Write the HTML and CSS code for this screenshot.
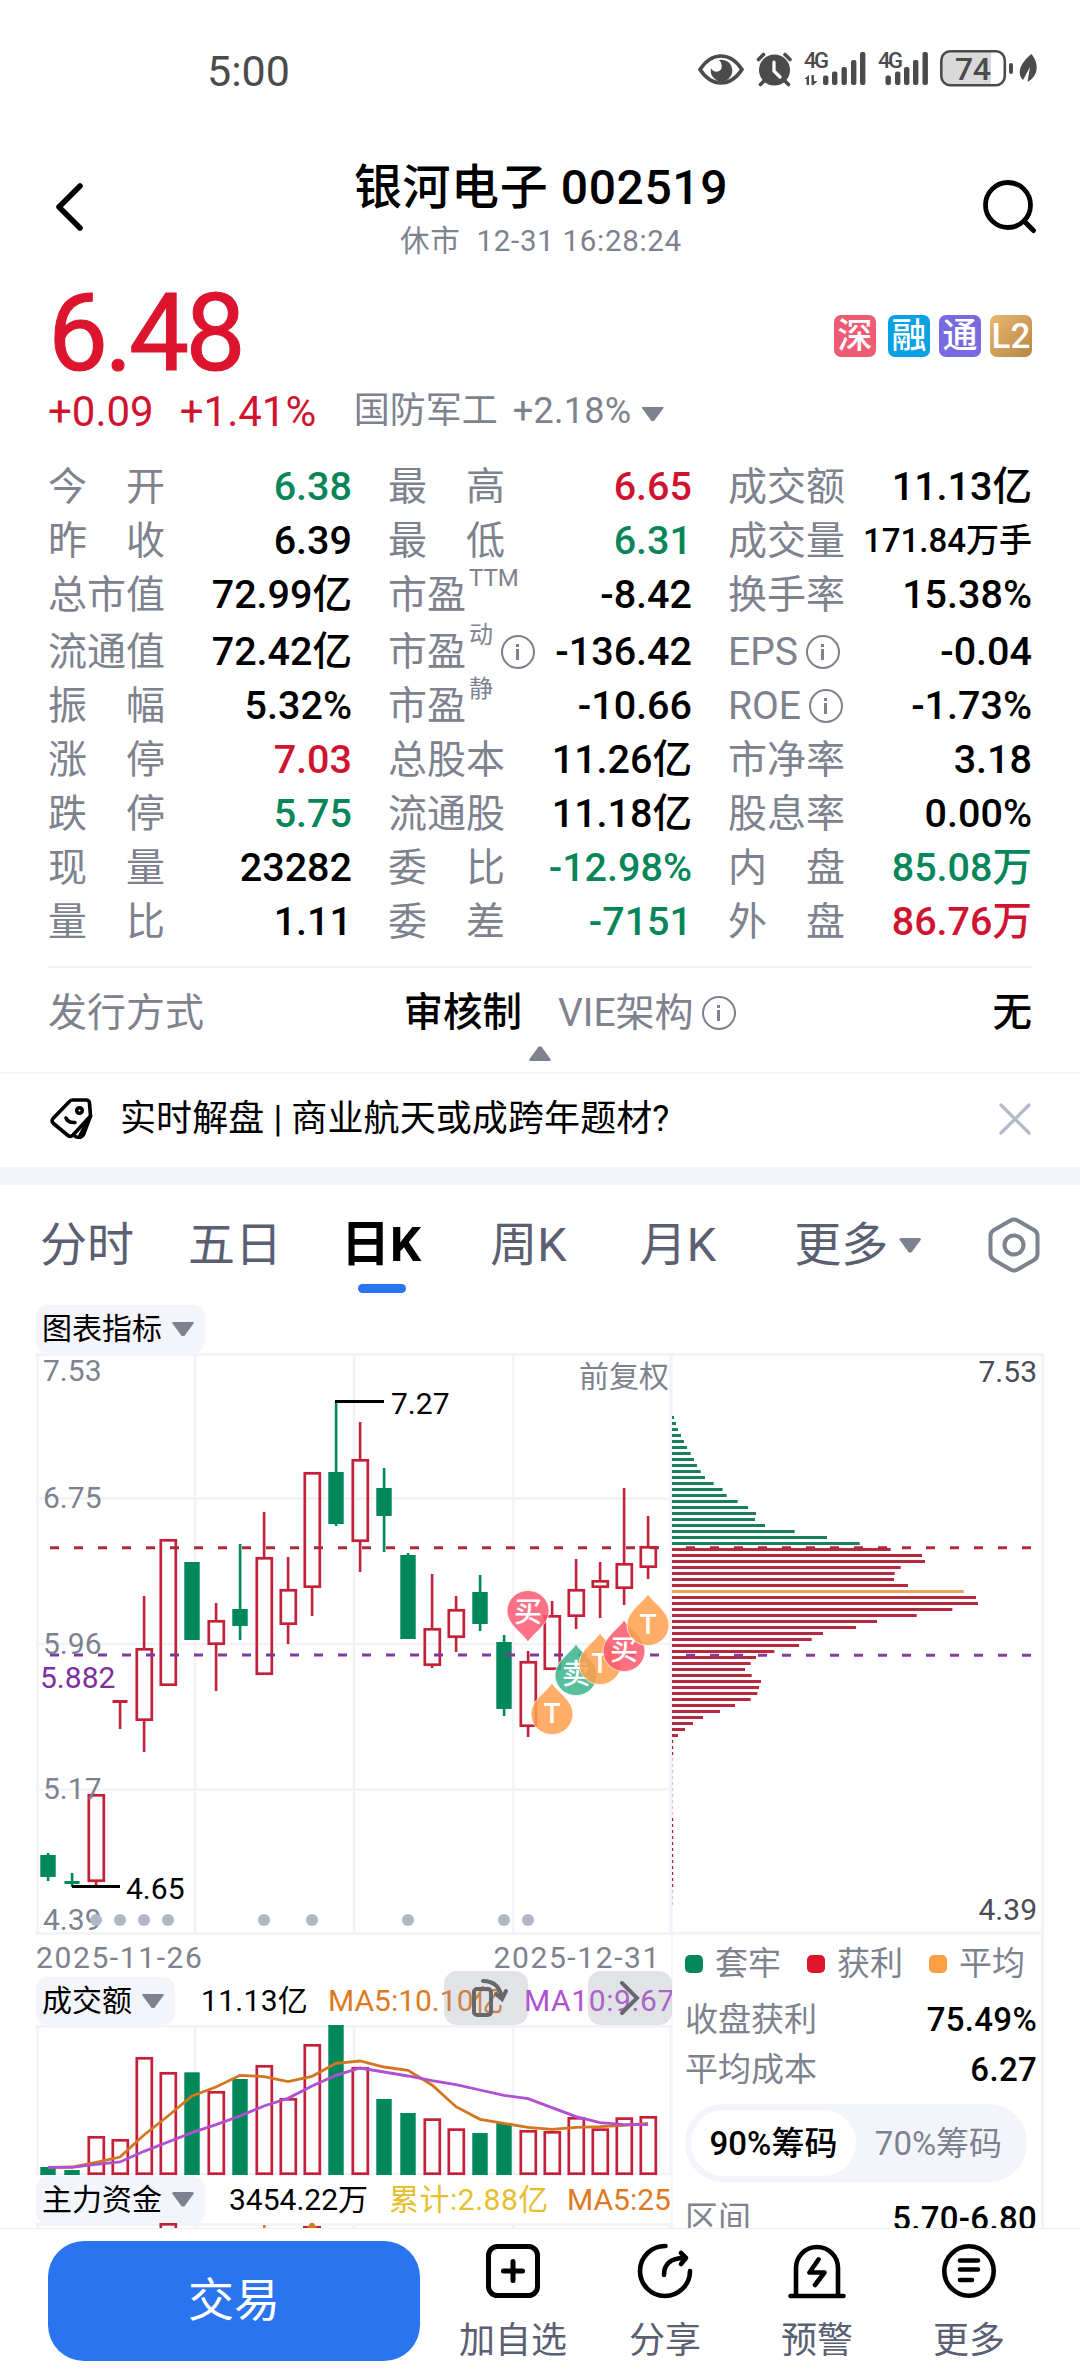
FILE: index.html
```html
<!DOCTYPE html>
<html lang="zh-CN">
<head>
  <meta charset="UTF-8">
  <title>银河电子 002519</title>
  <meta name="viewport" content="width=device-width, initial-scale=1.0">
  <link rel="stylesheet" href="styles.css">
</head>
<body>
  <div class="status">
    <span class="clock">5:00</span>
    <svg class="status-icons" width="342" height="44" viewBox="698 46 342 44">
      <!-- eye -->
      <path d="M700 69.500C707 59 714 56 721 56s14 3 21 13.500C735 80 728 83 721 83s-14-3-21-13.500z" fill="none" stroke="#4b4b4b" stroke-width="3.600"/>
      <path d="M719 60a10.800 10.800 0 1 1-8 8c2 5 9 5 10.500 0 .8-3.500-.5-6-2.500-8z" fill="#4b4b4b"/>
      <!-- alarm -->
      <g fill="none" stroke="#4b4b4b" stroke-width="3.600" stroke-linecap="round">
        <circle cx="774.500" cy="70" r="15.500" fill="#4b4b4b" stroke="none"/>
        <path d="M758.500 59.500l5-5M790 59.500l-5-5M764 81l-3.500 3.500M785 81l3.500 3.500"/>
        <path d="M774 62v9l6 6" stroke="#fff" stroke-width="3.200"/>
      </g>
      <!-- signal -->
      <g fill="#4b4b4b">
        <text class="net" x="804" y="68" textLength="25">4G</text>
        <path d="M809 75v10h-2.400v-6H804.500zM811.500 85V75h2.400v6h3.600l-4 4z"/>
        <rect x="823" y="75.500" width="5.400" height="9.500" rx="2"/>
        <rect x="832" y="71.500" width="5.400" height="13.500" rx="2"/>
        <rect x="841.500" y="67" width="5.400" height="18" rx="2"/>
        <rect x="851" y="60" width="5.400" height="25" rx="2"/>
        <rect x="860" y="52" width="5.400" height="33" rx="2"/>
        <text class="net" x="878" y="68" textLength="25">4G</text>
        <rect x="885.500" y="75.500" width="5.400" height="9.500" rx="2"/>
        <rect x="895" y="71.500" width="5.400" height="13.500" rx="2"/>
        <rect x="904" y="67" width="5.400" height="18" rx="2"/>
        <rect x="913" y="60" width="5.400" height="25" rx="2"/>
        <rect x="922.500" y="52" width="5.400" height="33" rx="2"/>
      </g>
      <!-- battery -->
      <path d="M950 52h41v33h-41q-8 0-8-8V60q0-8 8-8z" fill="#d9d9d9"/>
      <rect x="941.300" y="51.300" width="63.500" height="34" rx="9" fill="none" stroke="#4b4b4b" stroke-width="2.600"/>
      <rect x="1009" y="63" width="4" height="11" rx="2" fill="#4b4b4b"/>
      <text class="batt" x="955" y="80" textLength="36">74</text>
      <!-- leaf -->
      <path d="M1031.500 54c8 10 7 22-4 28l2.500-15-7 13c-6-6-4-16 8.500-26z" fill="#4b4b4b"/>
    </svg>
  </div>

  <header class="top">
    <svg width="36" height="56" viewBox="0 0 36 56"><path d="M32 7L11 28l21 21" fill="none" stroke="#000" stroke-width="5.500" stroke-linecap="round" stroke-linejoin="round"/></svg>
    <div class="title">
      <h1>银河电子 002519</h1>
      <p>休市&nbsp; 12-31 16:28:24</p>
    </div>
    <svg width="56" height="56" viewBox="0 0 56 56"><circle cx="26" cy="25" r="22.500" fill="none" stroke="#000" stroke-width="4.800"/><path d="M42 41l9.500 9.500" stroke="#000" stroke-width="5" stroke-linecap="round"/></svg>
  </header>

  <section class="quote">
    <div class="price-row">
      <div class="price">6.48</div>
      <div class="tags">
        <span class="tag sz">深</span><span class="tag rong">融</span><span class="tag tong">通</span><span class="tag l2">L2</span>
      </div>
    </div>
    <div class="change">
      <span class="chg">+0.09</span><span class="chg pct">+1.41%</span>
      <span class="industry">国防军工</span><span class="ind-pct">+2.18%</span><i class="tri"></i>
    </div>
  </section>

  <section class="stats">
    <div class="col">
      <div class="item"><label><b>今</b><b>开</b></label><span class="down">6.38</span></div>
      <div class="item"><label><b>昨</b><b>收</b></label><span>6.39</span></div>
      <div class="item"><label>总市值</label><span>72.99亿</span></div>
      <div class="item gap"><label>流通值</label><span>72.42亿</span></div>
      <div class="item"><label><b>振</b><b>幅</b></label><span>5.32%</span></div>
      <div class="item"><label><b>涨</b><b>停</b></label><span class="up">7.03</span></div>
      <div class="item"><label><b>跌</b><b>停</b></label><span class="down">5.75</span></div>
      <div class="item"><label><b>现</b><b>量</b></label><span>23282</span></div>
      <div class="item"><label><b>量</b><b>比</b></label><span>1.11</span></div>
    </div>
    <div class="col">
      <div class="item"><label><b>最</b><b>高</b></label><span class="up">6.65</span></div>
      <div class="item"><label><b>最</b><b>低</b></label><span class="down">6.31</span></div>
      <div class="item"><label>市盈<sup>TTM</sup></label><span>-8.42</span></div>
      <div class="item gap"><label>市盈<sup>动</sup><i class="info"></i></label><span>-136.42</span></div>
      <div class="item"><label>市盈<sup>静</sup></label><span>-10.66</span></div>
      <div class="item"><label>总股本</label><span>11.26亿</span></div>
      <div class="item"><label>流通股</label><span>11.18亿</span></div>
      <div class="item"><label><b>委</b><b>比</b></label><span class="down">-12.98%</span></div>
      <div class="item"><label><b>委</b><b>差</b></label><span class="down">-7151</span></div>
    </div>
    <div class="col">
      <div class="item"><label>成交额</label><span>11.13亿</span></div>
      <div class="item"><label>成交量</label><span class="small">171.84万手</span></div>
      <div class="item"><label>换手率</label><span>15.38%</span></div>
      <div class="item gap"><label>EPS<i class="info"></i></label><span>-0.04</span></div>
      <div class="item"><label>ROE<i class="info"></i></label><span>-1.73%</span></div>
      <div class="item"><label>市净率</label><span>3.18</span></div>
      <div class="item"><label>股息率</label><span>0.00%</span></div>
      <div class="item"><label><b>内</b><b>盘</b></label><span class="down">85.08万</span></div>
      <div class="item"><label><b>外</b><b>盘</b></label><span class="up">86.76万</span></div>
    </div>
  </section>

  <section class="extra">
    <div class="item"><label>发行方式</label><span>审核制</span></div>
    <div class="item"><label>VIE架构<i class="info"></i></label><span>无</span></div>
  </section>
  <div class="collapse"><i class="tri tri-up"></i></div>

  <section class="news">
    <svg width="44" height="46" viewBox="0 0 44 46">
      <g fill="none" stroke="#000" stroke-width="3.600" stroke-linecap="round" stroke-linejoin="round">
        <path d="M22.500 4H36q3 0 3.500 3l1 13-17.500 19q-2.500 2.500-5 .5L3.500 27.500q-2.500-2.500-.5-5L19 6q1.500-2 3.500-2z"/>
        <path d="M40.500 20l-7 18.500q-2 3.500-7 2.500l-3-2M37 26l-7 13.500"/>
        <circle cx="29.500" cy="14.500" r="2.800"/>
        <path d="M16 22q2 5 9 4.500"/>
      </g>
    </svg>
    <p>实时解盘 | 商业航天或成跨年题材?</p>
    <svg width="34" height="34" viewBox="0 0 34 34"><path d="M3 3l28 28M31 3L3 31" stroke="#b3b9c6" stroke-width="3.200" stroke-linecap="round"/></svg>
  </section>

  <nav class="tabs">
    <span>分时</span><span>五日</span><span class="active">日K</span><span>周K</span><span>月K</span><span>更多<i class="tri"></i></span>
    <svg width="54" height="58" viewBox="0 0 54 58"><path d="M23.500 4.500q3.500-2 7 0L47 14q3.500 2 3.500 6v18q0 4-3.500 6l-16.500 9.500q-3.500 2-7 0L7 44q-3.500-2-3.500-6V20q0-4 3.500-6z" fill="none" stroke="#7e828e" stroke-width="4"/><circle cx="27" cy="29" r="9.500" fill="none" stroke="#7e828e" stroke-width="4"/></svg>
  </nav>

  <main class="board">
    <div class="left">
      <div class="chip">图表指标<i class="tri"></i></div>
      <svg id="kline" class="chart" width="636" height="583" viewBox="36 1353 636 583"></svg>
      <div class="dates"><span>2025-11-26</span><span>2025-12-31</span></div>
      <div class="ind">
        <div class="chip">成交额<i class="tri"></i></div>
        <span class="v1">11.13亿</span><span class="ma5">MA5:10.10亿</span><span class="ma10">MA10:9.67亿</span>
        <button class="float rotate"><svg width="84" height="54" viewBox="444 1971 84 54"><g fill="none" stroke="#66686c" stroke-width="4" stroke-linecap="round"><rect x="474" y="1989" width="17" height="26" rx="3"/><path d="M483 1981q16 0 19 17M496 1994l6 5 4-8"/></g></svg></button>
        <button class="float next"><svg width="84" height="54" viewBox="588 1971 84 54"><path d="M622 1983l15 15-15 15" fill="none" stroke="#66686c" stroke-width="4" stroke-linecap="round"/></svg></button>
      </div>
      <svg id="volume" class="chart" width="636" height="151" viewBox="36 2025 636 151"></svg>
      <div class="ind fund">
        <div class="chip">主力资金<i class="tri"></i></div>
        <span class="f1">3454.22万</span><span class="sum">累计:2.88亿</span><span class="ma5">MA5:2568万</span>
      </div>
      <svg id="fund" class="chart" width="636" height="30" viewBox="36 2223 636 30"></svg>
    </div>
    <div class="right">
      <svg id="chips" class="chart" width="374" height="583" viewBox="670 1353 374 583"></svg>
      <div class="panel">
        <div class="legend">
          <span><i class="dot g"></i>套牢</span><span><i class="dot r"></i>获利</span><span><i class="dot o"></i>平均</span>
        </div>
        <div class="line"><label>收盘获利</label><span>75.49%</span></div>
        <div class="line"><label>平均成本</label><span>6.27</span></div>
        <div class="seg"><span class="on">90%筹码</span><span>70%筹码</span></div>
        <div class="line"><label>区间</label><span>5.70-6.80</span></div>
      </div>
    </div>
  </main>

  <footer class="bar">
    <button class="trade">交易</button>
    <div class="act">
      <svg width="60" height="60" viewBox="0 0 60 60"><g fill="none" stroke="#000" stroke-width="5" stroke-linecap="round"><rect x="5.500" y="5.500" width="49" height="49" rx="9"/><path d="M30 20.500v19M20.500 30h19"/></g></svg>
      <span>加自选</span>
    </div>
    <div class="act">
      <svg width="60" height="60" viewBox="0 0 60 60"><g fill="none" stroke="#000" stroke-width="4.600" stroke-linecap="round" stroke-linejoin="round"><path d="M30.500 5A25 25 0 1 0 55 30"/><path d="M29 34c0-11 7-17 20-17M46 12l5 5-5 6"/></g></svg>
      <span>分享</span>
    </div>
    <div class="act">
      <svg width="60" height="60" viewBox="0 0 60 60"><g fill="none" stroke="#000" stroke-width="4.600" stroke-linecap="round" stroke-linejoin="round"><path d="M9 54V27a21 21 0 0 1 42 0v27M3.500 55h53"/><path d="M31.500 18.500L22.500 31.500h15L28 44"/></g></svg>
      <span>预警</span>
    </div>
    <div class="act">
      <svg width="60" height="60" viewBox="0 0 60 60"><g fill="none" stroke="#000" stroke-width="4.600" stroke-linecap="round"><circle cx="30" cy="30" r="24.700"/><path d="M21 19.500h18M21 28.500h18M21 39h12"/></g></svg>
      <span>更多</span>
    </div>
  </footer>

  <script src="chart.js"></script>
</body>
</html>
```

FILE: styles.css
```css
* { box-sizing: border-box; }
body { margin: 0; width: 1080px; height: 2376px; overflow: hidden; display: flex; flex-direction: column; background: #fff; color: #000; font-family: Roboto, "Noto Sans CJK SC", sans-serif; line-height: 1.2; }
h1, p { margin: 0; font-weight: 400; }
svg { display: block; flex: none; }
button { border: none; padding: 0; font-family: inherit; line-height: inherit; }
i { font-style: normal; }
span, label { white-space: nowrap; }

.up { color: #d0142f; }
.down { color: #07865a; }
.tri { display: inline-block; width: 22px; height: 15px; background: #7e828e; clip-path: polygon(6% 0, 94% 0, 100% 8%, 56% 96%, 44% 96%, 0 8%); }
.tri-up { transform: rotate(180deg); }

.status { height: 140px; padding: 46px 40px 0 207px; display: flex; justify-content: space-between; flex: none; color: #4b4b4b; }
.clock { font-size: 43px; line-height: 50px; }
.net { font-size: 22px; font-weight: 500; }
.batt { font-size: 32px; font-weight: 500; fill: #4b4b4b; }

.top { height: 128px; padding: 0 46px 0 48px; display: flex; justify-content: space-between; flex: none; }
.top > svg { margin-top: 39px; }
.top > svg:last-child { margin: 40px -4px 0 0; }
.title { text-align: center; padding-left: 16px; }
.title h1 { font-size: 48px; font-weight: 500; line-height: 56px; margin-top: 20px; letter-spacing: 0.600px; }
.title p { font-size: 29.500px; line-height: 36px; margin-top: 7px; color: #7e828e; letter-spacing: 0.700px; }

.quote { padding: 0 48px; flex: none; height: 190px; }
.price-row { display: flex; justify-content: space-between; height: 120px; }
.price { font-size: 107px; font-weight: 400; line-height: 132px; letter-spacing: -3.700px; color: #dc142e; -webkit-text-stroke: 1px #dc142e; }
.tags { display: flex; gap: 9px; margin-top: 47px; }
.tag { width: 42px; height: 42px; border-radius: 7px; color: #fff; font-size: 35px; font-weight: 500; line-height: 43px; text-align: center; }
.sz { background: #ee5c74; margin-right: 3px; }
.rong { background: #0aa0e4; }
.tong { background: #7a6ae0; }
.l2 { background: linear-gradient(135deg, #ebb873, #b88442); }
.change { display: flex; align-items: center; height: 48px; color: #7e828e; font-size: 36px; }
.chg { font-size: 42px; color: #d0142f; }
.pct { margin-left: 26px; width: 138px; }
.industry { margin-left: 36px; font-size: 36px; }
.ind-pct { margin-left: 15px; width: 121px; letter-spacing: 0.300px; }
.change .tri { margin-left: 8px; margin-top: 4px; }

.stats { display: flex; gap: 36px; padding: 2px 48px 0; flex: none; height: 508px; }
.col { width: 304px; }
.item { display: flex; justify-content: space-between; align-items: center; height: 54px; font-size: 39.500px; font-weight: 500; }
.gap { margin-top: 3px; }
.item label { display: flex; align-items: center; justify-content: space-between; min-width: 117px; color: #7e828e; font-size: 39px; font-weight: 400; }
.item label:has(i), .item label:has(sup) { justify-content: flex-start; }
.item b { font-weight: 400; }
.item sup { font-size: 24px; line-height: 24px; align-self: flex-start; margin: -6px 0 0 3px; }
.item .small { font-size: 33px; }
.info { width: 34px; height: 34px; margin-left: 8px; border: 2.500px solid #7e828e; border-radius: 50%; position: relative; flex: none; }
.info::before { content: ""; position: absolute; left: 13px; top: 7px; width: 3px; height: 3px; background: #7e828e; }
.info::after { content: ""; position: absolute; left: 13px; top: 12px; width: 3px; height: 11px; background: #7e828e; }

.extra { display: flex; gap: 36px; margin: 0 48px; border-top: 2px solid #f4f4f6; height: 80px; padding-top: 18px; flex: none; }
.extra .item:first-child { width: 474px; }
.extra .item:last-child { flex: 1; }
.collapse { height: 28px; flex: none; text-align: center; border-bottom: 2px solid #f5f5f8; line-height: 14px; }

.news { display: flex; align-items: center; height: 93px; padding: 0 48px 3px 50px; flex: none; }
.news p { flex: 1; margin: -1px 0 0 26px; font-size: 36px; line-height: 50px; letter-spacing: 0.100px; }

.tabs { display: flex; align-items: center; height: 138px; padding: 0 39px 0 40px; border-top: 18px solid #f4f5fa; color: #5a6072; font-size: 47px; flex: none; }
.tabs span { position: relative; line-height: 60px; }
.tabs span:nth-child(2) { margin-left: 54px; }
.tabs span:nth-child(3) { margin-left: 59px; }
.tabs span:nth-child(4) { margin-left: 69px; }
.tabs span:nth-child(5) { margin-left: 73px; }
.tabs span:nth-child(6) { margin-left: 78px; }
.tabs .active { color: #000; font-weight: 700; font-size: 49px; }
.tabs .active::after { content: ""; position: absolute; left: 17px; bottom: -18px; width: 48px; height: 9px; border-radius: 5px; background: #2b74f0; }
.tabs .tri { margin-left: 11px; vertical-align: 8px; }
.tabs svg { margin-left: auto; }

.board { display: flex; height: 923px; padding-left: 36px; overflow: hidden; flex: none; }
.left { width: 634px; }
.chip { display: inline-flex; align-items: center; height: 48px; padding: 0 11px 0 6px; border-radius: 12px; background: #f4f5fa; font-size: 30px; vertical-align: top; white-space: nowrap; flex: none; }
.chip .tri { margin-left: 10px; }
.chart text { font-size: 30px; fill: #7e828e; }
.dates { display: flex; justify-content: space-between; height: 41px; padding-right: 9px; color: #7e828e; font-size: 30px; line-height: 43px; letter-spacing: 1.600px; }
.ind { position: relative; display: flex; align-items: center; width: 636px; height: 48px; clip-path: inset(-8px 0 0 0); font-size: 30px; }
.ind > span { flex: none; }
.v1 { margin-left: 26px; width: 127px; letter-spacing: 0.300px; }
.ma5 { color: #dd7a1d; width: 196px; }
.ma10 { color: #b050d6; letter-spacing: 0.600px; }
.fund { height: 47px; }
.f1 { margin-left: 24px; width: 160px; }
.sum { color: #e6c02c; width: 178px; letter-spacing: 0.500px; }
.float { position: absolute; top: -6px; width: 84px; height: 54px; border-radius: 13px; background: rgba(150, 155, 168, 0.28); }
.rotate { left: 408px; }
.next { left: 552px; }

.right { width: 374px; padding-top: 48px; }
.panel { border-right: 3px solid #f2f3f8; border-left: 2px solid #f5f6fa; height: 320px; padding: 0 4px 0 12px; margin-left: 1px; font-size: 33px; color: #7e828e; }
.legend { display: flex; justify-content: space-between; align-items: center; height: 56px; padding-right: 12px; }
.legend span { display: flex; align-items: center; gap: 12px; }
.dot { width: 18px; height: 18px; border-radius: 5px; }
.g { background: #00885a; }
.r { background: #e0142d; }
.o { background: #ff9f43; }
.line { display: flex; justify-content: space-between; align-items: center; height: 50px; }
.legend + .line { margin-top: 3px; }
.line span { color: #000; font-weight: 500; letter-spacing: 0.300px; }
.seg { display: flex; width: 342px; height: 78px; padding: 6px; margin: 9px 0 12px 0; border-radius: 38px; background: #f4f5fa; }
.seg span { width: 165px; line-height: 67px; text-align: center; border-radius: 33px; }
.seg .on { background: #fff; color: #000; font-weight: 500; }

.bar { display: flex; height: 148px; padding-left: 48px; border-top: 1px solid #efeff2; background: #fff; flex: none; }
.trade { width: 372px; height: 120px; margin: 12px 17px 0 0; border-radius: 36px; background: #2b74f0; color: #fff; font-size: 46px; }
.act { width: 152px; display: flex; flex-direction: column; align-items: center; padding-top: 12px; color: #5a6072; font-size: 36px; line-height: 50px; }
.act span { margin-top: 15px; }
```

FILE: chart.js
```js
const RED = '#c4203a', GREEN = '#00885a', GRID = '#f2f3f8';
const xAt = i => 48 + 24 * i;

// [up, high, body top, body bottom, low]
const candles = [
  [0, 1853, 1855, 1877, 1881], [0, 1873, 1881, 1884, 1887], [1, 1794, 1794, 1882, 1885], [1, 1700, 1700, 1703, 1729],
  [1, 1596, 1648, 1721, 1752], [1, 1539, 1539, 1686, 1686], [0, 1562, 1562, 1640, 1640], [1, 1603, 1620, 1645, 1691],
  [0, 1544, 1609, 1626, 1640], [1, 1512, 1557, 1675, 1675], [1, 1557, 1589, 1625, 1644], [1, 1472, 1472, 1588, 1616],
  [0, 1401, 1472, 1524, 1526], [1, 1422, 1459, 1542, 1572], [0, 1468, 1488, 1516, 1552], [0, 1553, 1555, 1639, 1639],
  [1, 1574, 1628, 1666, 1668], [1, 1596, 1609, 1638, 1652], [0, 1575, 1592, 1624, 1631], [0, 1635, 1642, 1709, 1716],
  [1, 1651, 1661, 1727, 1737], [1, 1601, 1615, 1670, 1670], [1, 1559, 1589, 1617, 1629], [1, 1562, 1580, 1588, 1618],
  [1, 1488, 1563, 1589, 1605], [1, 1516, 1546, 1568, 1579]
];
const volumes = [711, 720, 618, 627, 381, 426, 427, 483, 447, 405, 504, 342, 285, 411, 507, 549, 565, 595, 609, 579, 600, 603, 561, 595, 562, 558];
const ma5 = [712, 711, 697, 681, 615, 558, 498, 471, 436, 440, 455, 439, 400, 393, 411, 421, 465, 530, 568, 580, 592, 598, 592, 590, 586, 580];
const ma10 = [712, 712, 703, 696, 664, 636, 608, 584, 558, 528, 505, 468, 436, 414, 426, 438, 452, 464, 480, 496, 506, 533, 560, 578, 584, 584];
const cost = [6, 12, 18, 27, 36, 45, 56, 66, 75, 86, 99, 125, 152, 164, 197, 228, 252, 249, 279, 368, 465, 563,
  656, 750, 759, 686, 668, 666, 708, 875, 912, 918, 841, 734, 615, 552, 453, 419, 381, 307, 252, 236, 219, 239, 267, 261, 256, 236, 189, 144, 93, 63, 39, 18];

const rect = (x, y, w, h, fill) => `<rect x="${x}" y="${y}" width="${w}" height="${h}" fill="${fill}"/>`;
const text = (x, y, s, extra = '') => `<text x="${x}" y="${y}" ${extra}>${s}</text>`;
const dash = (x1, x2, y, color) => `<path d="M${x1} ${y}H${x2}" stroke="${color}" stroke-width="3" stroke-dasharray="9 15"/>`;

function box(x, top, bottom) {
  return `<rect x="${x - 7.2}" y="${top + 1.3}" width="15" height="${bottom - top - 2.6}" fill="none" stroke="${RED}" stroke-width="2.7"/>`;
}

function grid(top, bottom, rows) {
  let s = '';
  [37.5, 195, 354, 513, 670.5].forEach(x => s += rect(x - 1.2, top, 2.6, bottom - top, GRID));
  rows.forEach(y => s += rect(36, y - 1.3, 636, 2.6, GRID));
  return s;
}

function candle(c, i) {
  const [up, high, top, bottom, low] = c, x = xAt(i);
  const color = up ? RED : GREEN;
  let s = rect(x - 1.2, high, 2.6, top - high, color) + rect(x - 1.2, bottom, 2.6, low - bottom, color);
  if (bottom - top < 5) return s + rect(x - 7.5, top, 15, 3, color);
  return s + (up ? box(x, top, bottom) : rect(x - 7.7, top, 15.4, bottom - top, color));
}

function pin(x, y, color, label, down) {
  return `<g transform="translate(${x} ${y})"><path d="M0-30C5-21 21-13 21 1A21 20.500 0 0 1-21 1C-21-13-5-21 0-30Z" ${down ? 'transform="scale(1 -1)"' : ''} fill="${color}" fill-opacity=".86" stroke="#fff" stroke-opacity=".7" stroke-width="1"/>` +
    `<text y="10" text-anchor="middle" style="fill:#fff;font-size:28px;font-weight:500">${label}</text></g>`;
}

function drawKline() {
  let s = grid(1353, 1935, [1354.5, 1498.5, 1644, 1789.5, 1933.5]);
  s += candles.map(candle).join('');
  s += dash(50, 660, 1547.8, '#b02a3c') + dash(50, 660, 1655, '#7d3a9c');
  s += text(43, 1381, '7.53') + text(43, 1508, '6.75') + text(43, 1654, '5.96') + text(43, 1799, '5.17') + text(43, 1930, '4.39');
  s += text(40, 1688, '5.882', 'style="fill:#7d2f9e"');
  s += text(669, 1387, '前复权', 'text-anchor="end"');
  s += rect(335, 1400, 49, 3, '#000') + text(391, 1414, '7.27', 'style="fill:#000"');
  s += rect(72, 1885, 48, 3, '#000') + text(126, 1899, '4.65', 'style="fill:#000"');
  [2, 3, 4, 5, 9, 11, 15, 19, 20].forEach(i => s += `<circle cx="${xAt(i)}" cy="1920" r="6" fill="#b0b7c5"/>`);
  s += pin(528, 1612, '#fb5a72', '买', true);
  s += pin(576, 1674, '#3cb48c', '卖') + pin(600, 1663, '#ffa04e', 'T') + pin(624, 1650, '#fb5a6c', '买');
  s += pin(648, 1624, '#ffa04e', 'T') + pin(552, 1713, '#ffa04e', 'T');
  document.getElementById('kline').innerHTML = s;
}

function drawVolume() {
  const y = v => 1930 + v / 3;
  const line = (d, color) => `<polyline points="${d.map((v, i) => xAt(i) + ',' + y(v)).join(' ')}" fill="none" stroke="${color}" stroke-width="2.8"/>`;
  let s = grid(2025, 2175, [2026.3, 2174]);
  volumes.forEach((v, i) => s += candles[i][0] ? box(xAt(i), y(v), 2175) : rect(xAt(i) - 7.7, y(v), 15.4, 2175 - y(v), GREEN));
  s += line(ma5, '#d4761f') + line(ma10, '#b14fd2');
  document.getElementById('volume').innerHTML = s;
}

function drawFund() {
  let s = grid(2223, 2260, [2224.5]);
  s += box(168, 2223, 2260) + rect(303, 2226, 18, 3, RED) + rect(263, 2225, 2.6, 10, '#d4761f');
  s += '<path d="M304 2232L312 2221l8 11z" fill="#d4761f"/>';
  document.getElementById('fund').innerHTML = s;
}

function drawChips() {
  let s = rect(670, 1353, 374, 2.6, GRID) + rect(1041.3, 1353, 2.6, 583, GRID) + rect(670, 1932, 374, 2.6, GRID) + rect(670, 1353, 2.6, 583, GRID);
  cost.forEach((w, i) => {
    const color = i < 22 ? '#1c7f5c' : i === 29 ? '#e9a45c' : '#b52a3e';
    s += rect(672, 1416 + i * 6, w / 3, 3, color);
  });
  // long tail of old holdings
  for (let i = 54; i < 82; i++) {
    s += `<rect x="672" y="${1416 + i * 6}" width="1.2" height="3" fill="#a8283a" opacity="${i > 56 && i < 67 || i > 78 ? 0.25 : 1}"/>`;
  }
  s += dash(686, 1032, 1547.8, '#b02a3c') + dash(686, 1032, 1655.2, '#8a3a9c');
  s += text(1037, 1382, '7.53', 'text-anchor="end" style="fill:#4a4d55"') + text(1037, 1920, '4.39', 'text-anchor="end" style="fill:#4a4d55"');
  document.getElementById('chips').innerHTML = s;
}

drawKline();
drawVolume();
drawFund();
drawChips();
```
